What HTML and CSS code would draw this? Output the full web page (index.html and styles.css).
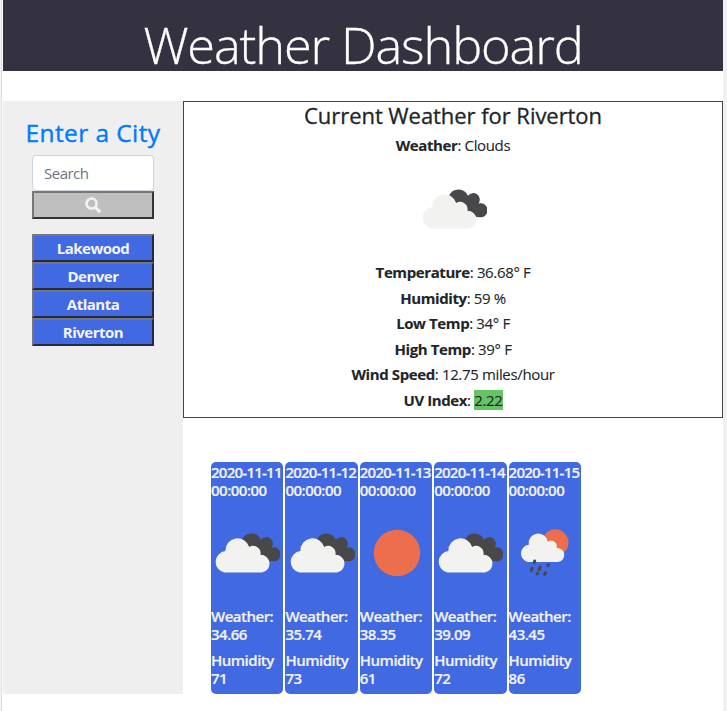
FILE: index.html
```html
<!DOCTYPE html>
<html lang="en">
<head>
<meta charset="utf-8">
<title>Weather Dashboard</title>
<link rel="stylesheet" href="styles.css">
</head>
<body>
<svg class="defs" width="0" height="0">
  <symbol id="clouds" viewBox="0.8 0 65 42">
    <path fill="#48484a" d="M28.500 8.500A10 10 0 0 1 47 8.700a6 6 0 0 1 10.500 7.500A7 7 0 1 1 57 29.500H44z"/>
    <path fill="#f2f2f0" d="M11 41a10.800 10.800 0 0 1 1-21.300A12 12 0 0 1 35.500 15.800A7.300 7.300 0 0 1 46.500 23.500A8.800 8.800 0 0 1 48 41z"/>
  </symbol>
  <symbol id="sun" viewBox="0 0 48 48"><circle cx="24" cy="24" r="23.200" fill="#ec6e4c"/></symbol>
  <symbol id="rain" viewBox="0 0 50 48">
    <circle cx="36.300" cy="13.500" r="13.200" fill="#ec6e4c"/>
    <path fill="#f2f2f0" d="M9 33a8.700 8.700 0 0 1 .8-17.200A9.500 9.500 0 0 1 28.700 12.400A5.900 5.900 0 0 1 37.500 19A7 7 0 0 1 39 33z"/>
    <path stroke="#48484a" stroke-width="3" stroke-linecap="round" d="M15.700 32l-.5 1.400M13.200 39.200l-1 2.400M21.200 37.800l-1.200 3M29.500 35.600l-.5 1M18.400 44.400l-.3.600M26.500 43.800l-.8 1.800"/>
  </symbol>
</svg>
<div class="page">
  <header class="banner"><h1>Weather Dashboard</h1></header>
  <main class="layout">
    <aside class="sidebar">
      <h2>Enter a City</h2>
      <input class="search" type="text" placeholder="Search" aria-label="Search">
      <button class="go" aria-label="Search"><svg width="16" height="16" viewBox="0 0 16 16"><circle cx="6.500" cy="6.500" r="5" fill="none" stroke="#f2f2f2" stroke-width="2.600"/><path d="M10.500 10.500l3.700 3.700" stroke="#f2f2f2" stroke-width="3.200" stroke-linecap="round"/></svg></button>
      <div class="cities">
        <button>Lakewood</button>
        <button>Denver</button>
        <button>Atlanta</button>
        <button>Riverton</button>
      </div>
    </aside>
    <div class="content">
      <section class="current">
        <h3>Current Weather for Riverton</h3>
        <p><b>Weather</b>: Clouds</p>
        <svg class="now"><use href="#clouds"/></svg>
        <p><b>Temperature</b>: 36.68° F</p>
        <p><b>Humidity</b>: 59 %</p>
        <p><b>Low Temp</b>: 34° F</p>
        <p><b>High Temp</b>: 39° F</p>
        <p><b>Wind Speed</b>: 12.75 miles/hour</p>
        <p><b>UV Index</b>: <span class="uv">2.22</span></p>
      </section>
      <section class="forecast">
        <article class="day"><p><span class="date">2020-11-11</span><br>00:00:00</p><div class="icon"><svg class="cl"><use href="#clouds"/></svg></div><p>Weather:<br>34.66</p><p class="hum">Humidity<br>71</p></article>
        <article class="day"><p><span class="date">2020-11-12</span><br>00:00:00</p><div class="icon"><svg class="cl"><use href="#clouds"/></svg></div><p>Weather:<br>35.74</p><p class="hum">Humidity<br>73</p></article>
        <article class="day"><p><span class="date">2020-11-13</span><br>00:00:00</p><div class="icon"><svg class="su"><use href="#sun"/></svg></div><p>Weather:<br>38.35</p><p class="hum">Humidity<br>61</p></article>
        <article class="day"><p><span class="date">2020-11-14</span><br>00:00:00</p><div class="icon"><svg class="cl"><use href="#clouds"/></svg></div><p>Weather:<br>39.09</p><p class="hum">Humidity<br>72</p></article>
        <article class="day"><p><span class="date">2020-11-15</span><br>00:00:00</p><div class="icon"><svg class="ra"><use href="#rain"/></svg></div><p>Weather:<br>43.45</p><p class="hum">Humidity<br>86</p></article>
      </section>
    </div>
  </main>
</div>
</body>
</html>
```
FILE: styles.css
```css
* { box-sizing: border-box; }
html, body { margin: 0; height: 711px; overflow: hidden; }
body { background: #fff; font: 15px/18px "Open Sans", "Noto Sans", sans-serif; color: #212529; border-left: 1px solid #f4f4f4; border-right: 4px solid #f1f1f1; }
h1, h2, h3, p { margin: 0; }
.defs { display: block; height: 0; }
.page { border-left: 1px solid #dedede; padding-left: 1px; height: 711px; }
.banner { height: 71px; background: #343141; color: #fff; text-align: center; white-space: nowrap; padding-top: 18px; }
.banner h1 { font-size: 50.500px; font-weight: 300; line-height: 53px; letter-spacing: -1.150px; -webkit-text-stroke: .3px #fff; }
.layout { display: flex; margin-top: 30px; height: 593px; }
.sidebar { width: 180px; background: #efefef; padding: 16px 29px 0; display: flex; flex-direction: column; }
.sidebar h2 { color: #007bff; font-size: 24.500px; font-weight: 500; line-height: 32px; margin: 0 -20px 6px; text-align: center; white-space: nowrap; letter-spacing: .4px; -webkit-text-stroke: .4px #007bff; }
.search { width: 122px; height: 36px; border: 1px solid #ced4da; border-radius: 4px; background: #fff; padding: 0 11px; font: 15px "Open Sans", sans-serif; letter-spacing: -.5px; }
.search::placeholder { color: #6c757d; opacity: 1; }
.go { height: 28px; padding: 0; border: 2px solid; border-color: #777 #333 #333 #777; background: #bfbfbf; display: flex; align-items: center; justify-content: center; }
.cities { margin-top: 15px; display: flex; flex-direction: column; }
.cities button { height: 28px; padding: 0; border: 2px solid; border-color: #74767b #252a3c #252a3c #74767b; background: #4169e1; color: #f4f4f4; font: 700 15px/22px "Open Sans", sans-serif; letter-spacing: -.5px; }
.content { flex: 1; }
.current { height: 317px; border: 1px solid #444; text-align: center; white-space: nowrap; }
.current h3 { font-size: 22px; font-weight: 500; line-height: 28px; margin: -1px 0 4px; letter-spacing: -.05px; -webkit-text-stroke: .3px #212529; }
.current p { line-height: 25.600px; letter-spacing: -.35px; -webkit-text-stroke: .1px #212529; }
.current b { font-weight: 700; letter-spacing: -.4px; }
.now { display: block; width: 66px; height: 42.600px; margin: 28.900px auto 30px; position: relative; left: .5px; }
.uv { display: inline-block; line-height: 20px; background: #65c466; }
.forecast { display: flex; gap: 2px; margin: 44px 0 0 28px; }
.day { width: 72.400px; height: 232px; border-radius: 5px; background: #4169e1; color: #f2f2f2; font-weight: 600; padding-top: 1px; white-space: nowrap; letter-spacing: -.5px; -webkit-text-stroke: .2px #f2f2f2; }
.day p { margin-bottom: 8px; }
.day .date { letter-spacing: -.75px; }
.day .hum { letter-spacing: -.5px; }
.icon { height: 100px; display: flex; align-items: center; justify-content: center; }
.icon svg { margin-top: -9px; }
.cl { width: 66px; height: 42.600px; }
.su { width: 48px; height: 48px; margin-left: 1.500px; }
.ra { width: 50px; height: 48px; margin-right: 2px; }
```
